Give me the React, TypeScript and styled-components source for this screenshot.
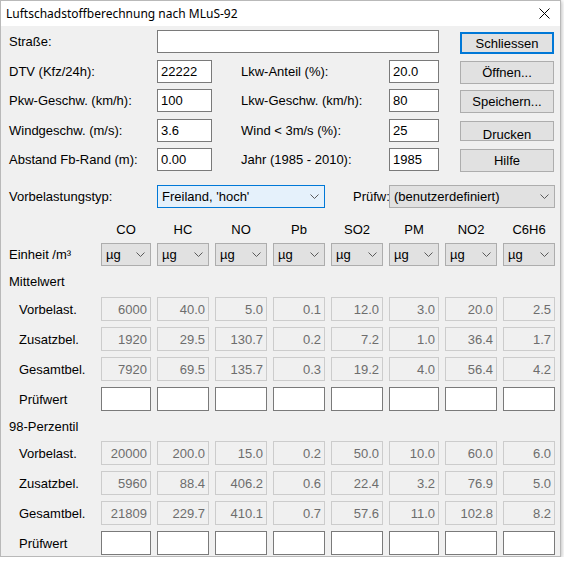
import styled, { createGlobalStyle } from 'styled-components';

const GlobalStyle = createGlobalStyle`
  html, body {
    margin: 0;
    padding: 0;
    background: #ffffff;
  }
  body {
    font-family: 'Liberation Sans', Arial, sans-serif;
    font-size: 13px;
    color: #000;
  }
`;

const POLLUTANTS = ['CO', 'HC', 'NO', 'Pb', 'SO2', 'PM', 'NO2', 'C6H6'];
const COL_WIDTHS = [50, 52, 52, 52, 52, 50, 52, 52];

const MITTELWERT = [
  { label: 'Vorbelast.', values: ['6000', '40.0', '5.0', '0.1', '12.0', '3.0', '20.0', '2.5'] },
  { label: 'Zusatzbel.', values: ['1920', '29.5', '130.7', '0.2', '7.2', '1.0', '36.4', '1.7'] },
  { label: 'Gesamtbel.', values: ['7920', '69.5', '135.7', '0.3', '19.2', '4.0', '56.4', '4.2'] },
];

const PERZENTIL = [
  { label: 'Vorbelast.', values: ['20000', '200.0', '15.0', '0.2', '50.0', '10.0', '60.0', '6.0'] },
  { label: 'Zusatzbel.', values: ['5960', '88.4', '406.2', '0.6', '22.4', '3.2', '76.9', '5.0'] },
  { label: 'Gesamtbel.', values: ['21809', '229.7', '410.1', '0.7', '57.6', '11.0', '102.8', '8.2'] },
];

const Chevron = () => (
  <svg width="9" height="5" viewBox="0 0 9 5">
    <polyline points="0.5,0.5 4.5,4.5 8.5,0.5" fill="none" stroke="#5a5a5a" strokeWidth="1" />
  </svg>
);

const CloseIcon = () => (
  <svg width="11" height="11" viewBox="0 0 11 11">
    <line x1="0.5" y1="0.5" x2="10.5" y2="10.5" stroke="#000" strokeWidth="1" />
    <line x1="10.5" y1="0.5" x2="0.5" y2="10.5" stroke="#000" strokeWidth="1" />
  </svg>
);

const Section = ({ title, rows }: { title: string; rows: { label: string; values: string[] }[] }) => (
  <>
    <SectionLabel>{title}</SectionLabel>
    <Spacer />
    {rows.map((row) => (
      <RowGroup key={row.label}>
        <RowLabel>{row.label}</RowLabel>
        {row.values.map((v, i) => (
          <ReadOnlyBox key={i}>{v}</ReadOnlyBox>
        ))}
      </RowGroup>
    ))}
    <RowLabel>Prüfwert</RowLabel>
    {POLLUTANTS.map((p) => (
      <EditBox key={p} />
    ))}
  </>
);

export default function App() {
  return (
    <>
      <GlobalStyle />
      <Window>
        <TitleBar>
          <Title>Luftschadstoffberechnung nach MLuS-92</Title>
          <CloseButton>
            <CloseIcon />
          </CloseButton>
        </TitleBar>
        <Body>
          <TopForm>
            <Label>Straße:</Label>
            <Input $span={3} />
            <Gap />
            <Button $default>Schliessen</Button>

            <Label>DTV (Kfz/24h):</Label>
            <Input defaultValue="22222" />
            <Label2>Lkw-Anteil (%):</Label2>
            <Input defaultValue="20.0" />
            <Gap />
            <Button>Öffnen...</Button>

            <Label>Pkw-Geschw. (km/h):</Label>
            <Input defaultValue="100" />
            <Label2>Lkw-Geschw. (km/h):</Label2>
            <Input defaultValue="80" />
            <Gap />
            <Button>Speichern...</Button>

            <Label>Windgeschw. (m/s):</Label>
            <Input defaultValue="3.6" />
            <Label2>Wind &lt; 3m/s (%):</Label2>
            <Input defaultValue="25" />
            <Gap />
            <Button $clipped>Drucken</Button>

            <Label>Abstand Fb-Rand (m):</Label>
            <Input defaultValue="0.00" />
            <Label2>Jahr (1985 - 2010):</Label2>
            <Input defaultValue="1985" />
            <Gap />
            <Button>Hilfe</Button>
          </TopForm>

          <TypeRow>
            <Label>Vorbelastungstyp:</Label>
            <Select $focused>
              <span>Freiland, 'hoch'</span>
              <Chevron />
            </Select>
            <Label2 $indent={28}>Prüfw:</Label2>
            <Select>
              <span>(benutzerdefiniert)</span>
              <Chevron />
            </Select>
          </TypeRow>

          <PollutantGrid>
            <span />
            {POLLUTANTS.map((p) => (
              <ColHead key={p}>{p}</ColHead>
            ))}

            <Label>Einheit /m³</Label>
            {POLLUTANTS.map((p) => (
              <UnitSelect key={p}>
                <span>µg</span>
                <Chevron />
              </UnitSelect>
            ))}

            <Section title="Mittelwert" rows={MITTELWERT} />
            <Section title="98-Perzentil" rows={PERZENTIL} />
          </PollutantGrid>
        </Body>
      </Window>
    </>
  );
}

const Window = styled.div`
  width: 559px;
  height: 555px;
  border: 1px solid #b9b9b9;
  box-shadow: 1px 1px 4px rgba(0, 0, 0, 0.25);
  display: flex;
  flex-direction: column;
  background: #f0f0f0;
`;

const TitleBar = styled.div`
  height: 25px;
  background: #ffffff;
  display: flex;
  align-items: center;
  justify-content: space-between;
  padding: 0 9px 0 5px;
`;

const Title = styled.div`
  font-family: 'Noto Sans', 'Open Sans', sans-serif;
  font-size: 12px;
  color: #000;
`;

const CloseButton = styled.div`
  display: flex;
  align-items: center;
  justify-content: center;
  width: 14px;
  height: 14px;
`;

const Body = styled.div`
  flex: 1;
  padding: 4px 0 0 8px;
`;

const TopForm = styled.div`
  display: grid;
  grid-template-columns: 148px 55px 177px 50px 21px 94px;
  grid-auto-rows: 23px;
  row-gap: 6.5px;
`;

const Label = styled.div`
  display: flex;
  align-items: center;
  white-space: nowrap;
  font-size: 13px;
`;

const Label2 = styled(Label)<{ $indent?: number }>`
  padding-left: ${({ $indent }) => $indent ?? 29}px;
`;

const Gap = styled.div``;

const Input = styled.input<{ $span?: number }>`
  grid-column: span ${({ $span }) => $span ?? 1};
  box-sizing: border-box;
  width: 100%;
  height: 23px;
  margin: 0;
  border: 1px solid #7a7a7a;
  background: #ffffff;
  padding: 0 3px;
  font-family: 'Liberation Sans', Arial, sans-serif;
  font-size: 13px;
  color: #000;
  outline: none;
`;

const Button = styled.div<{ $default?: boolean; $clipped?: boolean }>`
  box-sizing: border-box;
  height: ${({ $default, $clipped }) => ($default ? '22px' : $clipped ? '20px' : '23px')};
  margin-top: ${({ $default, $clipped }) => ($default || $clipped ? '2px' : '1px')};
  display: flex;
  justify-content: center;
  align-items: ${({ $clipped }) => ($clipped ? 'flex-start' : 'center')};
  padding-top: ${({ $clipped }) => ($clipped ? '5px' : '0')};
  overflow: hidden;
  background: #e1e1e1;
  border: ${({ $default }) => ($default ? '2px solid #0078d7' : '1px solid #adadad')};
  font-size: 13px;
  line-height: 15px;
  color: #000;
`;

const TypeRow = styled.div`
  display: grid;
  grid-template-columns: 148px 168px 64px 166px;
  height: 23px;
  margin-top: 14px;
`;

const Select = styled.div<{ $focused?: boolean }>`
  box-sizing: border-box;
  height: 23px;
  display: flex;
  align-items: center;
  justify-content: space-between;
  padding: 0 5px 0 4px;
  background: ${({ $focused }) => ($focused ? '#e5f1fb' : '#e1e1e1')};
  border: 1px solid ${({ $focused }) => ($focused ? '#0078d7' : '#adadad')};
  font-size: 13px;
  color: #000;
`;

const PollutantGrid = styled.div`
  display: grid;
  grid-template-columns: 86px ${COL_WIDTHS.map((w) => `${w}px`).join(' ')};
  grid-template-rows: 14px 23px 19px 24px 24px 24px 24px 18px 24px 24px 24px 24px;
  column-gap: 6px;
  row-gap: 6px;
  margin-top: 15px;
`;

const ColHead = styled.div`
  text-align: center;
  line-height: 14px;
  font-size: 13px;
`;

const UnitSelect = styled(Select)`
  padding: 0 5px 0 4px;
`;

const SectionLabel = styled(Label)``;

const Spacer = styled.div`
  grid-column: span 8;
`;

const RowGroup = styled.div`
  display: contents;
`;

const RowLabel = styled(Label)`
  padding-left: 10px;
`;

const ReadOnlyBox = styled.div`
  box-sizing: border-box;
  height: 24px;
  display: flex;
  align-items: center;
  justify-content: flex-end;
  padding-right: 3px;
  background: #f0f0f0;
  border: 1px solid #cccccc;
  color: #6d6d6d;
  font-size: 13px;
`;

const EditBox = styled.div`
  box-sizing: border-box;
  height: 24px;
  background: #ffffff;
  border: 1px solid #7a7a7a;
`;
